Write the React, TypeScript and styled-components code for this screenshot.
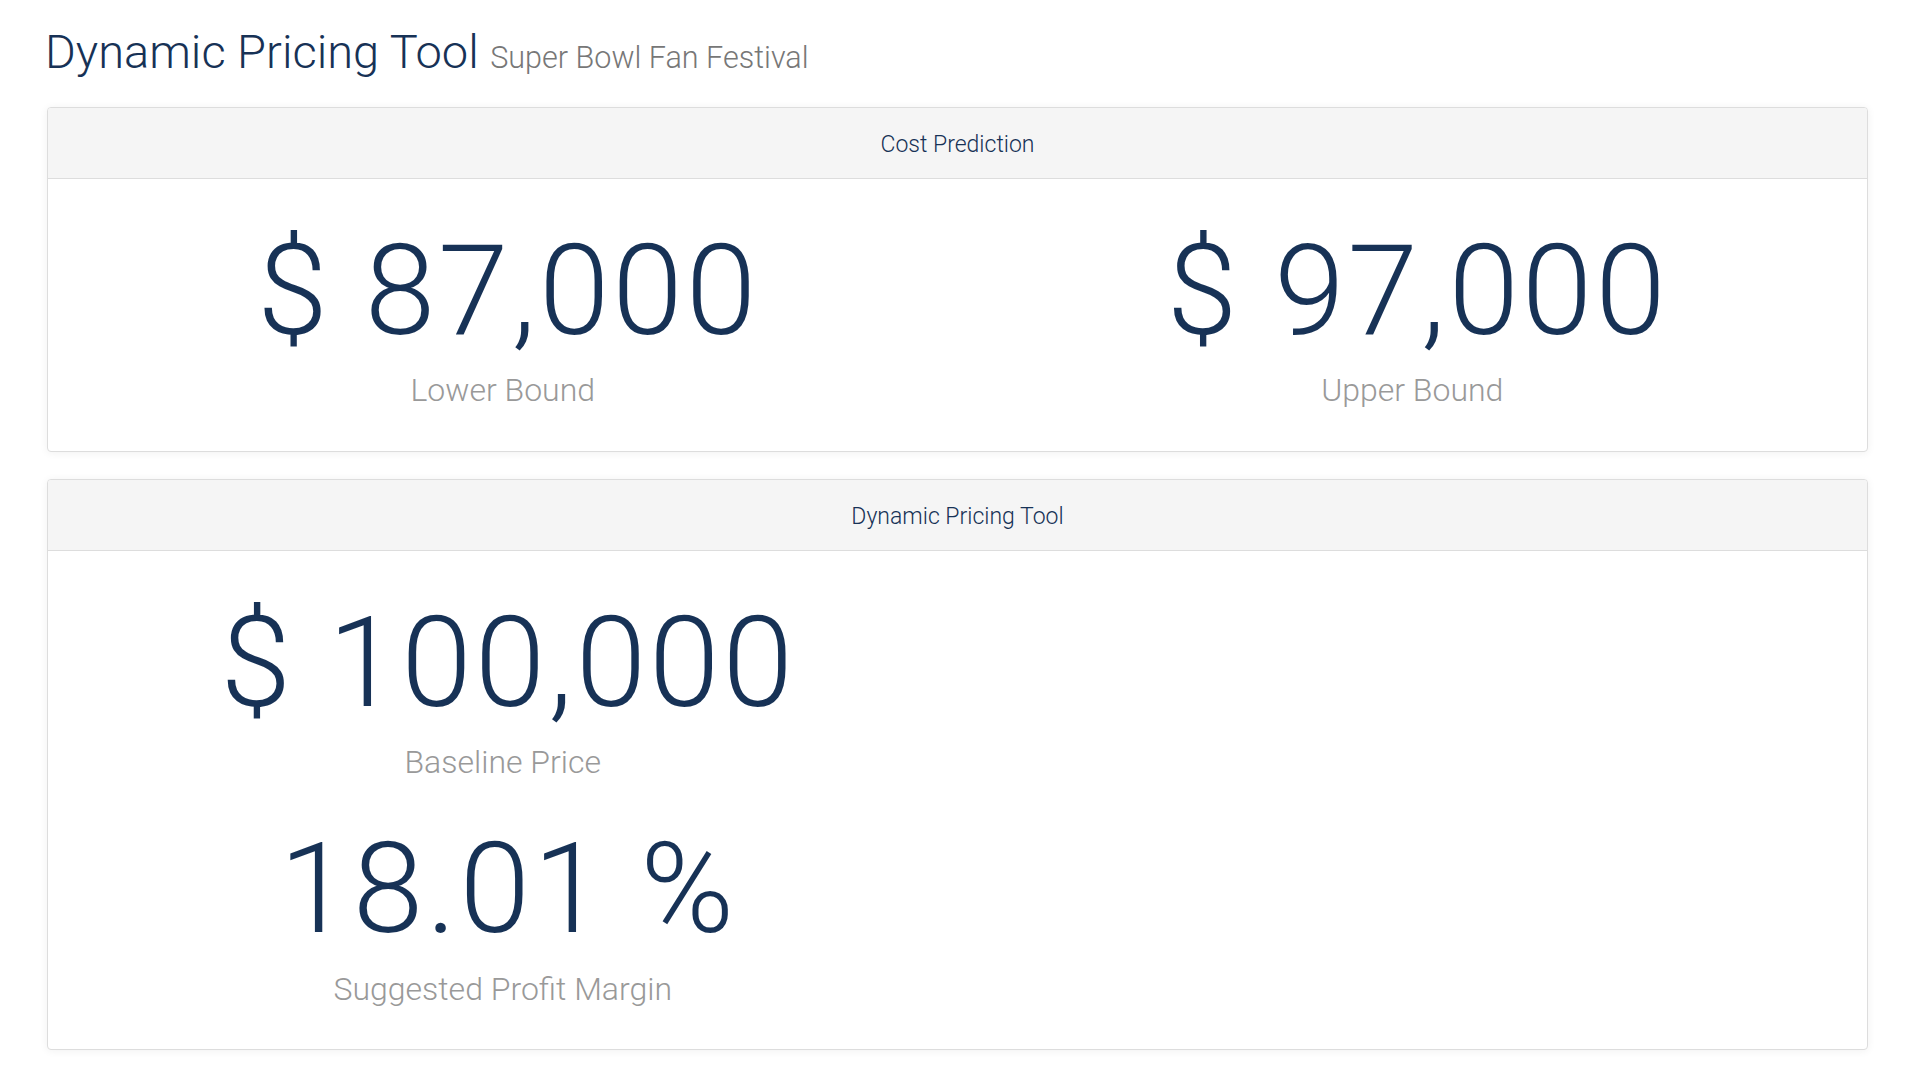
import React from "react";
import styled, { createGlobalStyle } from "styled-components";

const NAVY = "#173256";

const GlobalStyle = createGlobalStyle`
  html, body {
    margin: 0;
    padding: 0;
    background: #ffffff;
  }
  body {
    font-family: Roboto, "Helvetica Neue", "Liberation Sans", Arial, sans-serif;
    font-weight: 300;
    color: ${NAVY};
    -webkit-font-smoothing: antialiased;
  }
`;

const Page = styled.div`
  padding: 26px 58px 0 47px;
`;

const Title = styled.h1`
  margin: 0 0 29px -2px;
  font-size: 47px;
  line-height: 1.1;
  font-weight: 300;
  color: ${NAVY};
  white-space: nowrap;
`;

const Subtitle = styled.small`
  font-size: 65%;
  font-weight: 300;
  color: #777777;
`;

const Panel = styled.section`
  border: 1px solid #dddddd;
  border-radius: 4px;
  background: #ffffff;
  box-shadow: 0 1px 8px rgba(0, 0, 0, 0.06);
  margin-bottom: 27px;
  overflow: hidden;
`;

const PanelHeader = styled.header`
  box-sizing: border-box;
  height: 71px;
  padding-top: 3px;
  display: flex;
  align-items: center;
  justify-content: center;
  background: #f5f5f5;
  border-bottom: 1px solid #dddddd;
  font-size: 23px;
  font-weight: 300;
  color: ${NAVY};
`;

const PanelBody = styled.div`
  display: grid;
  grid-template-columns: 1fr 1fr;
  padding: 42px 0 41px;
`;

const Column = styled.div`
  display: flex;
  flex-direction: column;
  align-items: center;
  gap: 37px;
`;

const Stat = styled.div`
  display: flex;
  flex-direction: column;
  align-items: center;
`;

const Value = styled.div`
  font-size: 127px;
  line-height: 1.1;
  font-weight: 300;
  letter-spacing: 3px;
  padding-left: 11px;
  color: ${NAVY};
  margin-bottom: 11px;
  white-space: nowrap;
`;

const Label = styled.div`
  font-size: 32px;
  line-height: 1.2;
  font-weight: 300;
  color: #999999;
  white-space: nowrap;
`;

type StatItem = { value: string; label: string };

const StatBlock: React.FC<StatItem> = ({ value, label }) => (
  <Stat>
    <Value>{value}</Value>
    <Label>{label}</Label>
  </Stat>
);

export default function App() {
  return (
    <>
      <GlobalStyle />
      <Page>
        <Title>
          Dynamic Pricing Tool <Subtitle>Super Bowl Fan Festival</Subtitle>
        </Title>

        <Panel>
          <PanelHeader>Cost Prediction</PanelHeader>
          <PanelBody>
            <Column>
              <StatBlock value="$ 87,000" label="Lower Bound" />
            </Column>
            <Column>
              <StatBlock value="$ 97,000" label="Upper Bound" />
            </Column>
          </PanelBody>
        </Panel>

        <Panel>
          <PanelHeader>Dynamic Pricing Tool</PanelHeader>
          <PanelBody>
            <Column>
              <StatBlock value="$ 100,000" label="Baseline Price" />
              <StatBlock value="18.01 %" label="Suggested Profit Margin" />
            </Column>
            <Column />
          </PanelBody>
        </Panel>
      </Page>
    </>
  );
}
